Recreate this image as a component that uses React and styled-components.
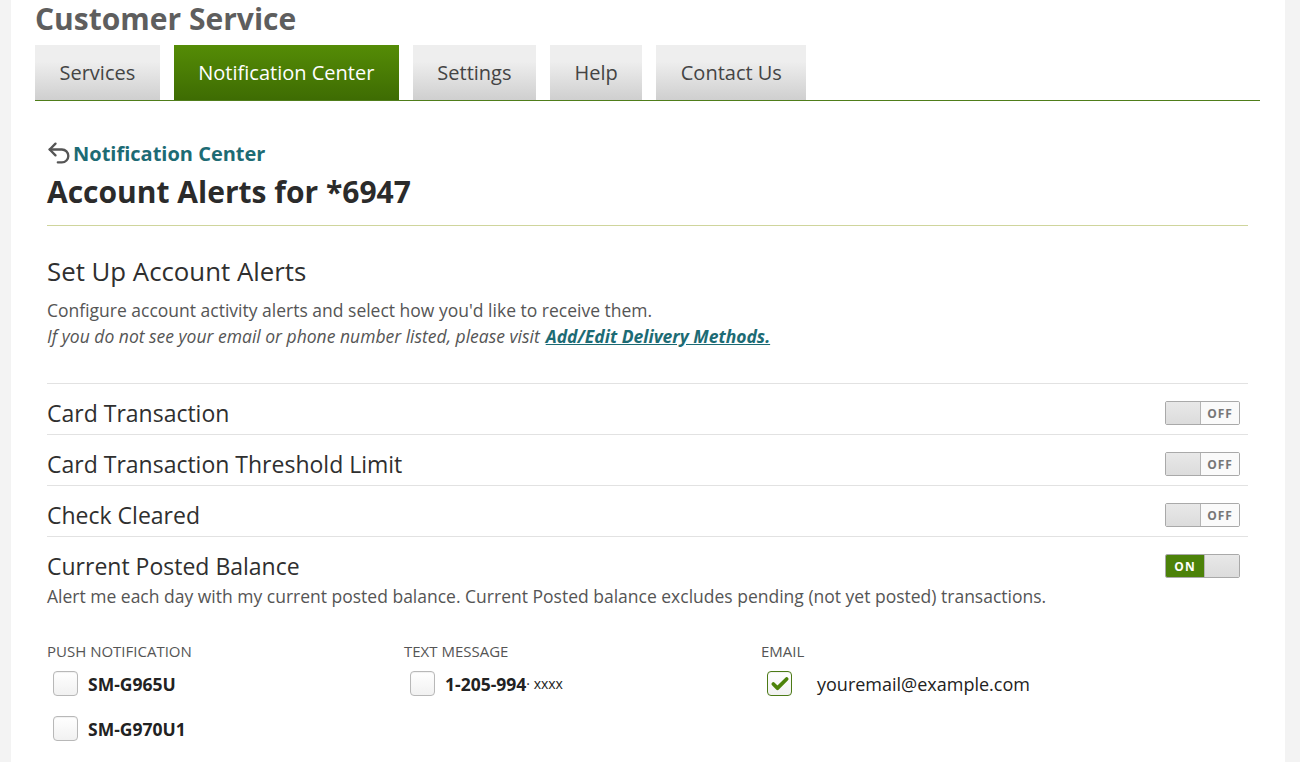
import React from 'react';
import styled, { createGlobalStyle } from 'styled-components';
import { Undo2, Check } from 'lucide-react';

const GlobalStyle = createGlobalStyle`
  body {
    margin: 0;
    background: #f3f3f3;
    font-family: "Open Sans", "Liberation Sans", sans-serif;
    color: #333;
  }
`;

const Page = styled.div`
  margin: 0 15px 0 11px;
  min-height: 762px;
  background: #fff;
  padding: 0 25px 0 24px;
`;

const SiteTitle = styled.h1`
  margin: 0;
  font-size: 30px;
  line-height: 38px;
  font-weight: 700;
  color: #5e5e5e;
`;

const TabBar = styled.nav`
  margin-top: 7px;
  display: flex;
  gap: 14px;
  border-bottom: 1px solid #4f7d1a;
`;

const Tab = styled.div`
  height: 55px;
  display: flex;
  align-items: center;
  padding: 0 24.5px;
  font-size: 20px;
  color: ${(p) => (p.$active ? '#fff' : '#444')};
  background: ${(p) =>
    p.$active
      ? 'linear-gradient(#558c06, #3e6c03)'
      : 'linear-gradient(#eeeeee 30%, #cfcfcf)'};
`;

const Content = styled.main`
  padding: 0 12px;
`;

const BackLink = styled.a`
  margin-top: 38px;
  display: flex;
  align-items: center;
  font-size: 20px;
  font-weight: 700;
  color: #1d6b74;
  text-decoration: none;
  svg {
    color: #555;
    margin-left: -2px;
  }
`;

const PageHeading = styled.h2`
  margin: 5px 0 0;
  padding-bottom: 13px;
  font-size: 30px;
  line-height: 40px;
  font-weight: 700;
  color: #2b2b2b;
  border-bottom: 1px solid #cfd59c;
`;

const SectionTitle = styled.h3`
  margin: 29px 0 0;
  font-size: 25.8px;
  line-height: 32px;
  font-weight: 500;
  color: #2f2f2f;
`;

const Intro = styled.p`
  margin: 10px 0 0;
  font-size: 17.5px;
  line-height: 26px;
  color: #555;
  em {
    font-style: italic;
  }
  a {
    margin-left: 6px;
    color: #1d6b74;
    font-weight: 700;
    text-decoration: underline;
  }
`;

const AlertList = styled.div`
  margin-top: 34px;
  border-top: 1px solid #e2e2e2;
`;

const AlertRow = styled.div`
  height: 42px;
  padding-top: 8px;
  display: flex;
  align-items: center;
  justify-content: space-between;
  border-bottom: ${(p) => (p.$last ? 'none' : '1px solid #e2e2e2')};
`;

const AlertName = styled.span`
  font-size: 23px;
  color: #2f2f2f;
`;

const ToggleBox = styled.div`
  margin-right: 8px;
  width: 73px;
  height: 22px;
  display: flex;
  border: 1px solid #a9a9a9;
  border-radius: 2px;
  overflow: hidden;
  font-size: 12px;
  font-weight: 700;
  letter-spacing: 1px;
`;

const Knob = styled.span`
  width: 34px;
  background: linear-gradient(#e8e8e8, #dcdcdc);
  border-left: ${(p) => (p.$right ? '1px solid #b5b5b5' : 'none')};
  border-right: ${(p) => (p.$right ? 'none' : '1px solid #b5b5b5')};
`;

const ToggleLabel = styled.span`
  flex: 1;
  display: flex;
  align-items: center;
  justify-content: center;
  color: ${(p) => (p.$on ? '#fff' : '#777')};
  background: ${(p) => (p.$on ? '#4c8209' : '#fafafa')};
`;

const Toggle = ({ on }) => (
  <ToggleBox>
    {on ? (
      <>
        <ToggleLabel $on>ON</ToggleLabel>
        <Knob $right />
      </>
    ) : (
      <>
        <Knob />
        <ToggleLabel>OFF</ToggleLabel>
      </>
    )}
  </ToggleBox>
);

const AlertDesc = styled.p`
  margin: -3px 0 0;
  font-size: 17.5px;
  line-height: 24px;
  color: #555;
`;

const Methods = styled.div`
  margin-top: 33px;
  display: grid;
  grid-template-columns: 357px 357px 1fr;
`;

const MethodColumn = styled.div`
  display: flex;
  flex-direction: column;
`;

const MethodLabel = styled.div`
  font-size: 15px;
  line-height: 20px;
  color: #555;
  text-transform: uppercase;
`;

const Option = styled.label`
  margin-top: ${(p) => (p.$first ? '10px' : '20px')};
  padding-left: 6px;
  display: flex;
  align-items: center;
  gap: 10px;
  font-size: 17.5px;
  line-height: 24px;
  font-weight: 700;
  color: #222;
`;

const Box = styled.span`
  width: 25px;
  height: 25px;
  box-sizing: border-box;
  display: flex;
  align-items: center;
  justify-content: center;
  border: 1px solid ${(p) => (p.$checked ? '#4c7a16' : '#b8b8b8')};
  border-radius: 4px;
  background: linear-gradient(#fff, #f1f1f1);
  box-shadow: inset 0 1px 1px rgba(0, 0, 0, 0.06);
  svg {
    color: #4c8209;
  }
`;

const Masked = styled.span`
  font-size: 14px;
  font-weight: 400;
  margin-left: -10px;
`;

const EmailText = styled.span`
  margin-left: 15px;
  font-weight: 400;
  font-size: 18px;
  color: #222;
`;

const Checkbox = ({ checked }) => (
  <Box $checked={checked}>{checked && <Check size={20} strokeWidth={4.5} />}</Box>
);

const alerts = [
  { name: 'Card Transaction', on: false },
  { name: 'Card Transaction Threshold Limit', on: false },
  { name: 'Check Cleared', on: false },
  { name: 'Current Posted Balance', on: true },
];

const tabs = ['Services', 'Notification Center', 'Settings', 'Help', 'Contact Us'];

export default function App() {
  return (
    <>
      <GlobalStyle />
      <Page>
        <SiteTitle>Customer Service</SiteTitle>
        <TabBar>
          {tabs.map((t) => (
            <Tab key={t} $active={t === 'Notification Center'}>
              {t}
            </Tab>
          ))}
        </TabBar>
        <Content>
          <BackLink href="#">
            <Undo2 size={28} strokeWidth={2} />
            Notification Center
          </BackLink>
          <PageHeading>Account Alerts for *6947</PageHeading>
          <SectionTitle>Set Up Account Alerts</SectionTitle>
          <Intro>
            Configure account activity alerts and select how you'd like to receive them.
            <br />
            <em>If you do not see your email or phone number listed, please visit</em>
            <a href="#">
              <em>Add/Edit Delivery Methods.</em>
            </a>
          </Intro>
          <AlertList>
            {alerts.map((a, i) => (
              <AlertRow key={a.name} $last={i === alerts.length - 1}>
                <AlertName>{a.name}</AlertName>
                <Toggle on={a.on} />
              </AlertRow>
            ))}
          </AlertList>
          <AlertDesc>
            Alert me each day with my current posted balance. Current Posted balance excludes pending (not yet posted) transactions.
          </AlertDesc>
          <Methods>
            <MethodColumn>
              <MethodLabel>Push Notification</MethodLabel>
              <Option $first>
                <Checkbox />
                SM-G965U
              </Option>
              <Option>
                <Checkbox />
                SM-G970U1
              </Option>
            </MethodColumn>
            <MethodColumn>
              <MethodLabel>Text Message</MethodLabel>
              <Option $first>
                <Checkbox />
                1-205-994<Masked>· xxxx</Masked>
              </Option>
            </MethodColumn>
            <MethodColumn>
              <MethodLabel>Email</MethodLabel>
              <Option $first>
                <Checkbox checked />
                <EmailText>youremail@example.com</EmailText>
              </Option>
            </MethodColumn>
          </Methods>
        </Content>
      </Page>
    </>
  );
}
